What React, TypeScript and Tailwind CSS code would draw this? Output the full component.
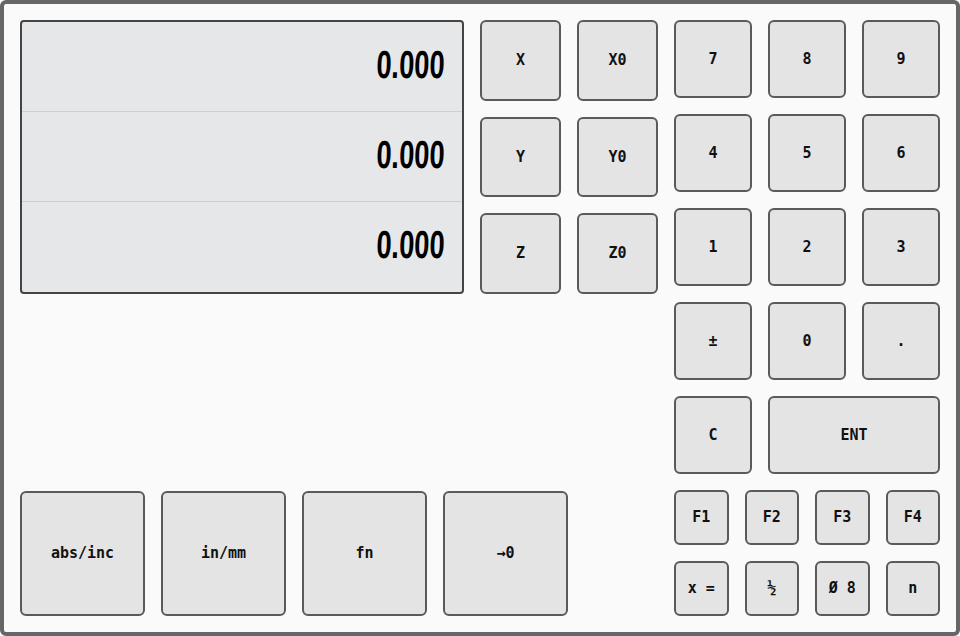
const mono = { fontFamily: '"DejaVu Sans Mono", "Liberation Mono", monospace' };

function Key({ label, className = '' }: { label: string; className?: string }) {
  return (
    <button
      style={mono}
      className={`flex items-center justify-center rounded-md border-2 border-[#5a5a5a] bg-[#e4e4e4] text-[15px] font-bold text-[#111] ${className}`}
    >
      {label}
    </button>
  );
}

function Readout({ value, last }: { value: string; last?: boolean }) {
  return (
    <div
      className={`flex h-[90px] items-center justify-end pr-[17px] ${last ? '' : 'border-b border-[#cfcfd1]'}`}
    >
      <span
        style={{ fontFamily: '"Liberation Sans", Arial, sans-serif' }}
        className="origin-right -skew-x-3 scale-x-[0.7] pb-[5px] text-[39px] font-bold leading-none text-black"
      >
        {value}
      </span>
    </div>
  );
}

const axisKeys = ['X', 'X0', 'Y', 'Y0', 'Z', 'Z0'];
const numKeys = ['7', '8', '9', '4', '5', '6', '1', '2', '3', '±', '0', '.'];
const fnKeys = ['F1', 'F2', 'F3', 'F4', 'x =', '½', 'Ø 8', 'n'];
const modeKeys = ['abs/inc', 'in/mm', 'fn', '→0'];

function App() {
  return (
    <div className="h-[636px] w-[960px] rounded-md border-4 border-[#666] bg-[#fafafa] p-4">
      <div className="flex h-full gap-4">
        {/* left side: readouts + axis keys, mode keys below */}
        <div className="flex w-[638px] flex-col justify-between">
          <div className="flex gap-4">
            <div className="h-[274px] w-[444px] rounded-sm border-2 border-[#444] bg-[#e6e7e9]">
              <Readout value="0.000" />
              <Readout value="0.000" />
              <Readout value="0.000" last />
            </div>
            <div className="grid w-[178px] grid-cols-2 grid-rows-3 gap-4">
              {axisKeys.map((k) => (
                <Key key={k} label={k} />
              ))}
            </div>
          </div>
          <div className="flex gap-4">
            {modeKeys.map((k) => (
              <Key key={k} label={k} className="h-[125px] w-[125px]" />
            ))}
          </div>
        </div>

        {/* right side: numeric keypad + function keys */}
        <div className="flex w-[266px] flex-col gap-4">
          <div className="grid grid-cols-3 auto-rows-[78px] gap-4">
            {numKeys.map((k) => (
              <Key key={k} label={k} />
            ))}
            <Key label="C" />
            <Key label="ENT" className="col-span-2" />
          </div>
          <div className="grid flex-1 grid-cols-4 grid-rows-2 gap-4">
            {fnKeys.map((k) => (
              <Key key={k} label={k} className={k === '½' ? 'text-[12px]' : ''} />
            ))}
          </div>
        </div>
      </div>
    </div>
  );
}

export default App;
